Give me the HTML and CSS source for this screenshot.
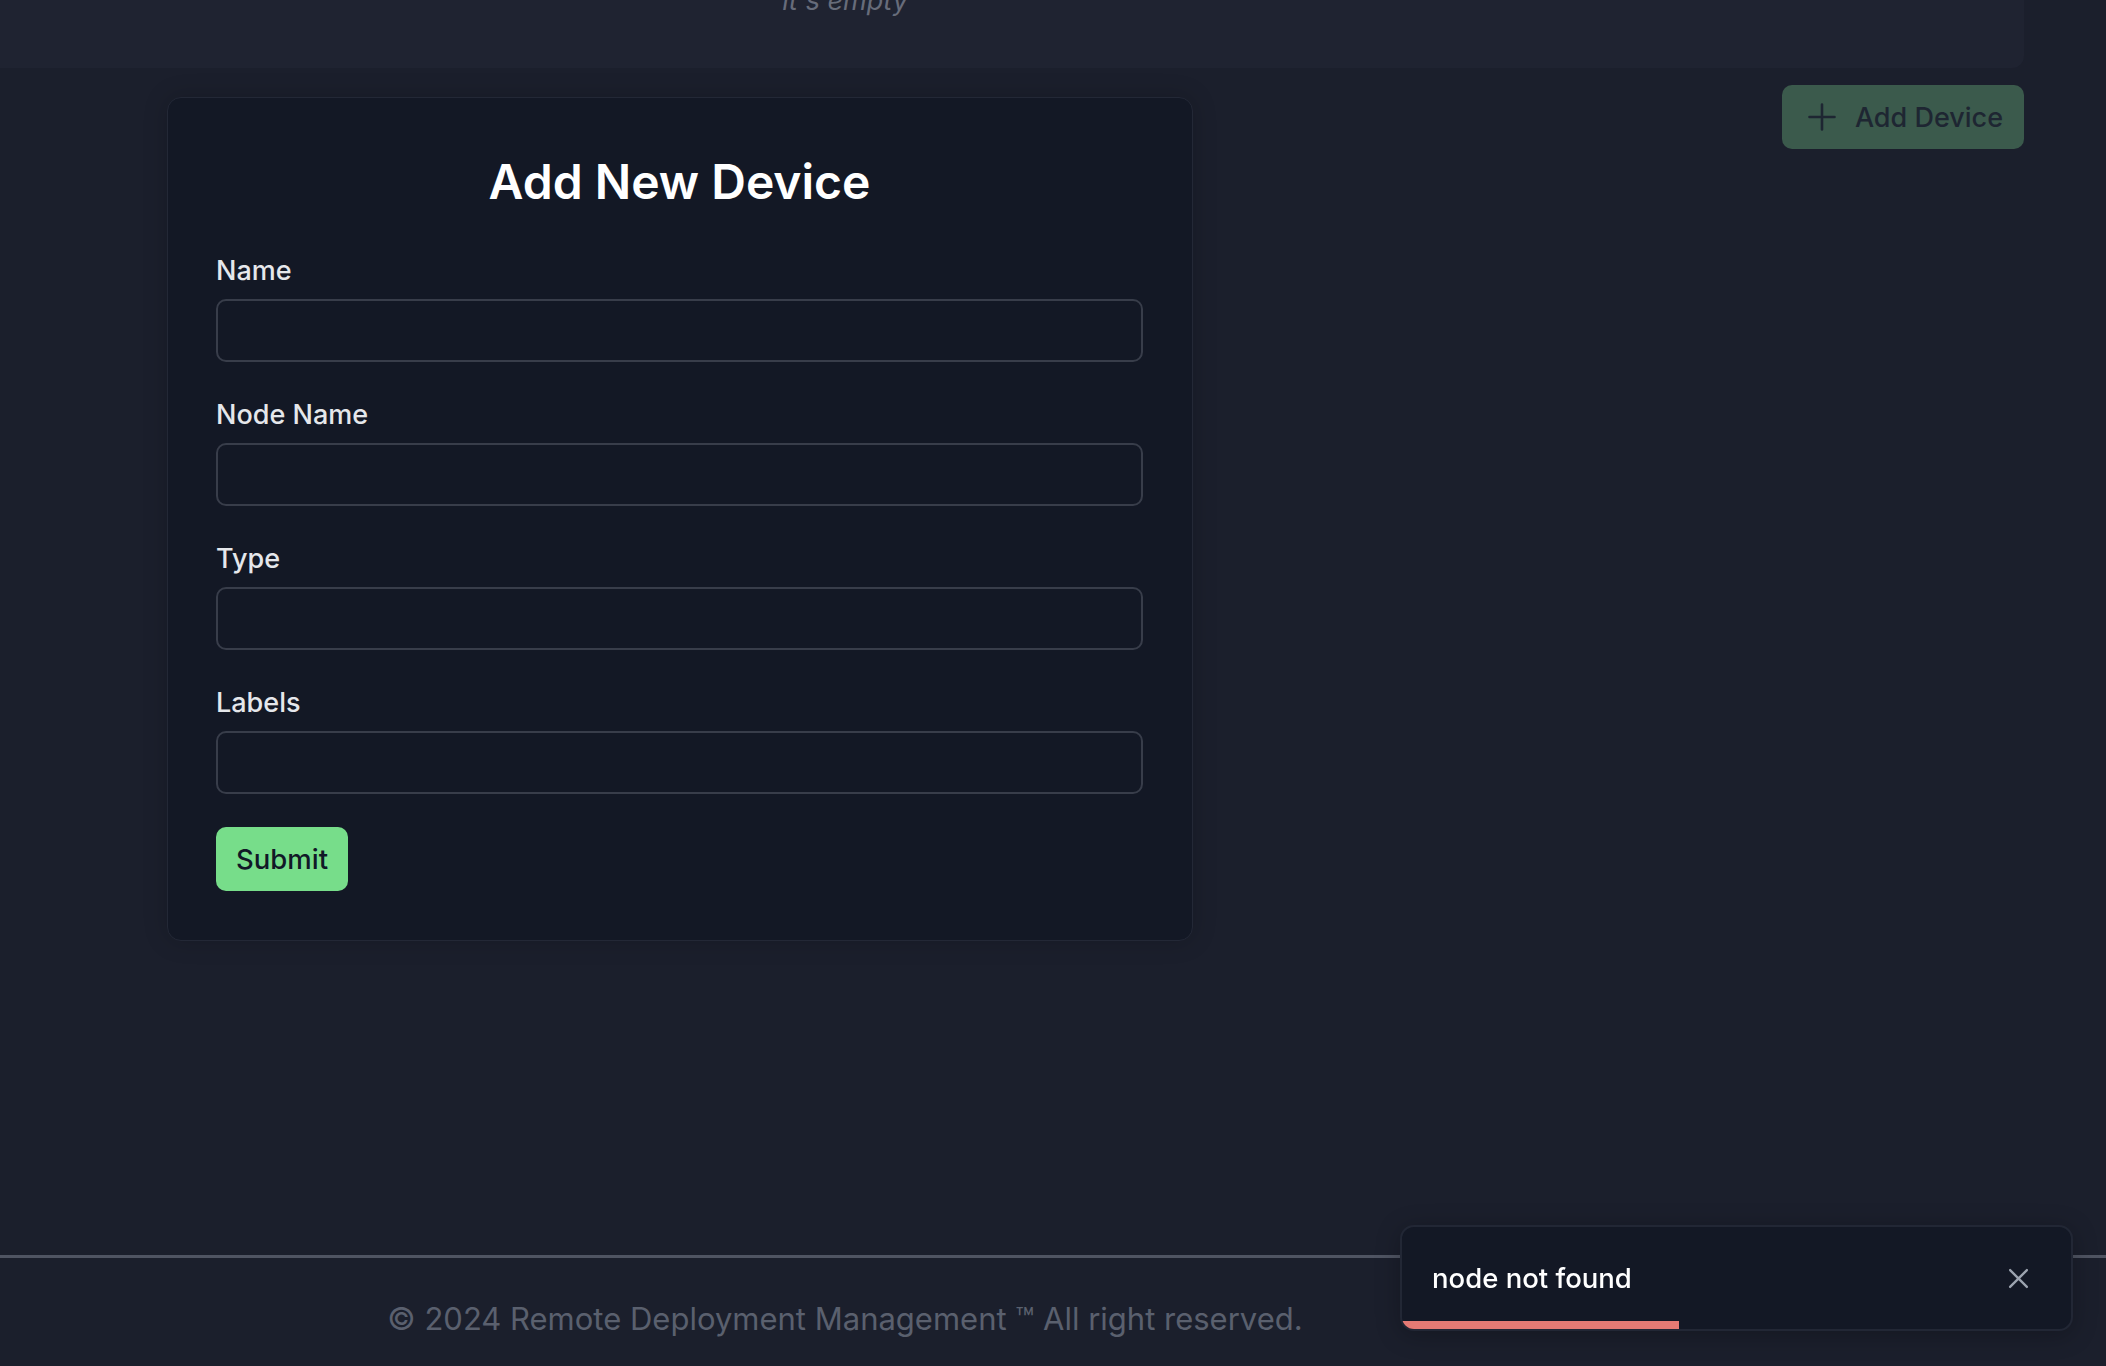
FILE: index.html
```html
<!DOCTYPE html>
<html lang="en">
<head>
<meta charset="utf-8">
<title>Devices</title>
<link rel="stylesheet" href="styles.css">
</head>
<body>
<div class="page">
  <div class="top-panel">
    <p class="empty-text">it's empty</p>
  </div>
  <main class="main">
    <section class="card">
      <h1 class="card-title">Add New Device</h1>
      <form class="form">
        <div class="field">
          <label class="field-label" for="f-name">Name</label>
          <input class="field-input" id="f-name" type="text">
        </div>
        <div class="field">
          <label class="field-label" for="f-node">Node Name</label>
          <input class="field-input" id="f-node" type="text">
        </div>
        <div class="field">
          <label class="field-label" for="f-type">Type</label>
          <input class="field-input" id="f-type" type="text">
        </div>
        <div class="field">
          <label class="field-label" for="f-labels">Labels</label>
          <input class="field-input" id="f-labels" type="text">
        </div>
        <button class="submit-btn" type="button">Submit</button>
      </form>
    </section>
    <button class="add-btn" type="button">
      <svg class="add-icon" viewBox="0 0 28 28" width="28" height="28" aria-hidden="true">
        <path d="M14 1.5V26.5M1.5 14H26.5" stroke="currentColor" stroke-width="2.6" stroke-linecap="round" fill="none"/>
      </svg>
      <span>Add Device</span>
    </button>
  </main>
  <footer class="footer">
    <p class="footer-text">© 2024 Remote Deployment Management ™ All right reserved.</p>
  </footer>
</div>
<div class="toast" role="alert">
  <span class="toast-text">node not found</span>
  <button class="toast-close" type="button" aria-label="Close">
    <svg viewBox="0 0 20 20" width="21" height="21" aria-hidden="true">
      <path d="M2 2L18 18M18 2L2 18" stroke="currentColor" stroke-width="2.2" stroke-linecap="round" fill="none"/>
    </svg>
  </button>
  <div class="toast-progress"></div>
</div>
</body>
</html>
```
FILE: styles.css
```css
* {
  box-sizing: border-box;
}

html, body {
  margin: 0;
  padding: 0;
}

body {
  background: #1b1f2c;
  font-family: Inter, "Noto Sans", "Liberation Sans", sans-serif;
  color: #e5e7eb;
  overflow: hidden;
}

.page {
  height: 1366px;
  display: flex;
  flex-direction: column;
}

.top-panel {
  width: 2024px;
  height: 68px;
  flex: none;
  background: #1f2331;
  border-bottom-right-radius: 12px;
  overflow: hidden;
  padding-right: 334px;
}

.empty-text {
  margin: -13px 0 0 0;
  font-size: 27px;
  line-height: 27px;
  font-style: italic;
  color: #676c7a;
  text-align: center;
}

.main {
  flex: 1;
  display: flex;
  justify-content: space-between;
  align-items: flex-start;
  padding: 0 82px 0 167px;
}

.card {
  margin-top: 29px;
  width: 1026px;
  padding: 49px 49px 49px 48px;
  background: #131825;
  border: 1px solid #232836;
  border-radius: 14px;
  box-shadow: 0 0 24px rgba(0, 0, 0, 0.18);
}

.card-title {
  margin: 5px 0 39px 0;
  font-size: 48px;
  line-height: 60px;
  font-weight: 600;
  color: #ffffff;
  text-align: center;
}

.form {
  display: flex;
  flex-direction: column;
  align-items: flex-start;
}

.field {
  width: 100%;
  display: flex;
  flex-direction: column;
  margin-bottom: 33px;
}

.field-label {
  font-size: 27px;
  line-height: 40px;
  font-weight: 500;
  color: #e5e7eb;
  margin-bottom: 8px;
}

.field-input {
  width: 100%;
  height: 63px;
  background: #131825;
  border: 2px solid #383d4a;
  border-radius: 10px;
  font-family: inherit;
  font-size: 24px;
  color: #e5e7eb;
  padding: 0 16px;
  outline: none;
}

.submit-btn {
  height: 64px;
  padding: 0 20px;
  border: none;
  border-radius: 10px;
  background: #77dd8a;
  color: #111827;
  font-family: inherit;
  font-size: 27.5px;
  font-weight: 500;
}

.add-btn {
  margin-top: 17px;
  height: 64px;
  display: flex;
  align-items: center;
  gap: 19px;
  padding: 0 21px 0 26px;
  border: none;
  border-radius: 10px;
  background: #3b5a4c;
  color: #1e2632;
  font-family: inherit;
  font-size: 27px;
  font-weight: 500;
}

.add-icon {
  display: block;
  flex: none;
}

.footer {
  flex: none;
  height: 111px;
  border-top: 3px solid #4f5462;
  padding: 42px 416px 0 0;
}

.footer-text {
  margin: 0;
  font-size: 31px;
  line-height: 37px;
  color: #5a606e;
  text-align: center;
}

.toast {
  position: fixed;
  right: 33px;
  bottom: 35px;
  width: 673px;
  height: 106px;
  display: flex;
  align-items: center;
  justify-content: space-between;
  padding: 0 42px 0 30px;
  background: #131825;
  border: 2px solid #222735;
  border-radius: 14px;
  overflow: hidden;
  box-shadow: 0 4px 24px rgba(0, 0, 0, 0.25);
}

.toast-text {
  font-size: 27.5px;
  font-weight: 500;
  color: #ffffff;
}

.toast-close {
  display: flex;
  padding: 0;
  border: none;
  background: transparent;
  color: #9ca3af;
}

.toast-progress {
  position: absolute;
  left: 0;
  bottom: 0;
  width: 277px;
  height: 8px;
  background: #e57a74;
}
```
